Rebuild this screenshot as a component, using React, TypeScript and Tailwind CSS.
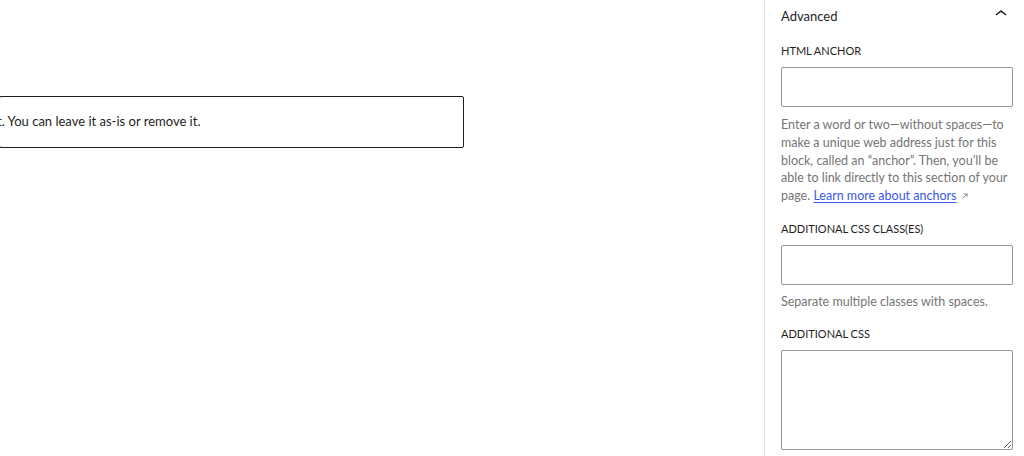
import { useState } from "react";

const font = { fontFamily: 'Lato, "Open Sans", Arial, sans-serif' };

function ChevronUp() {
  return (
    <svg viewBox="0 0 24 24" className="w-6 h-6 shrink-0 fill-[#1e1e1e]" aria-hidden>
      <path d="M6.5 12.4L12 8l5.5 4.4-.9 1.2L12 10l-4.6 3.6-.9-1.2z" />
    </svg>
  );
}

function ExternalArrow() {
  return (
    <svg viewBox="0 0 12 12" className="inline-block w-[10px] h-[10px] ml-[4px] align-[-1px]" aria-hidden>
      <path d="M3 9l5.5-5.5M5 3.5h3.5V7" stroke="#757575" strokeWidth="1" fill="none" />
    </svg>
  );
}

function Label({ children }: { children: React.ReactNode }) {
  return (
    <label className="block text-[11px] leading-4 uppercase text-[#1e1e1e]">
      {children}
    </label>
  );
}

export default function App() {
  const [anchor, setAnchor] = useState("");
  const [classes, setClasses] = useState("");
  const [css, setCss] = useState("");

  return (
    <div className="flex w-[1024px] h-[456px] overflow-hidden bg-white" style={font}>
      {/* Canvas */}
      <main className="flex-1 overflow-hidden pt-[96px]">
        <div className="w-[465px] h-[52px] -ml-px border border-[#1e1e1e] rounded-[2px] flex items-center">
          <p className="text-[13px] text-[#1e1e1e] -ml-[3px] whitespace-nowrap">
            t. You can leave it as-is or remove it.
          </p>
        </div>
      </main>

      {/* Sidebar */}
      <aside className="w-[260px] shrink-0 border-l border-[#e0e0e0] pl-4 pr-[11px]">
        <div className="flex items-start justify-between">
          <h2 className="pt-[6px] text-[13px] leading-5 text-[#1e1e1e]">Advanced</h2>
          <div className="mt-[2px]">
            <ChevronUp />
          </div>
        </div>

        <div className="mt-[17px]">
          <Label>HTML anchor</Label>
          <input
            value={anchor}
            onChange={(e) => setAnchor(e.target.value)}
            className="mt-2 block w-full h-10 px-2 border border-[#949494] rounded-[2px] text-[13px] outline-none"
          />
          <p className="mt-[9px] text-[12.5px] leading-[17.8px] text-[#757575]">
            Enter a word or two—without spaces—to make a unique web address just for this block, called an
            “anchor”. Then, you’ll be able to link directly to this section of your page.{" "}
            <a href="#" className="text-[#3858e9] underline underline-offset-2">
              Learn more about anchors
            </a>
            <ExternalArrow />
          </p>
        </div>

        <div className="mt-4">
          <Label>Additional CSS class(es)</Label>
          <input
            value={classes}
            onChange={(e) => setClasses(e.target.value)}
            className="mt-2 block w-full h-10 px-2 border border-[#949494] rounded-[2px] text-[13px] outline-none"
          />
          <p className="mt-2 text-[12.5px] leading-[18px] text-[#757575]">Separate multiple classes with spaces.</p>
        </div>

        <div className="mt-[15px]">
          <Label>Additional CSS</Label>
          <textarea
            value={css}
            onChange={(e) => setCss(e.target.value)}
            className="mt-2 block w-full h-[100px] p-2 border border-[#949494] rounded-[2px] text-[13px] outline-none"
          />
        </div>
      </aside>
    </div>
  );
}
